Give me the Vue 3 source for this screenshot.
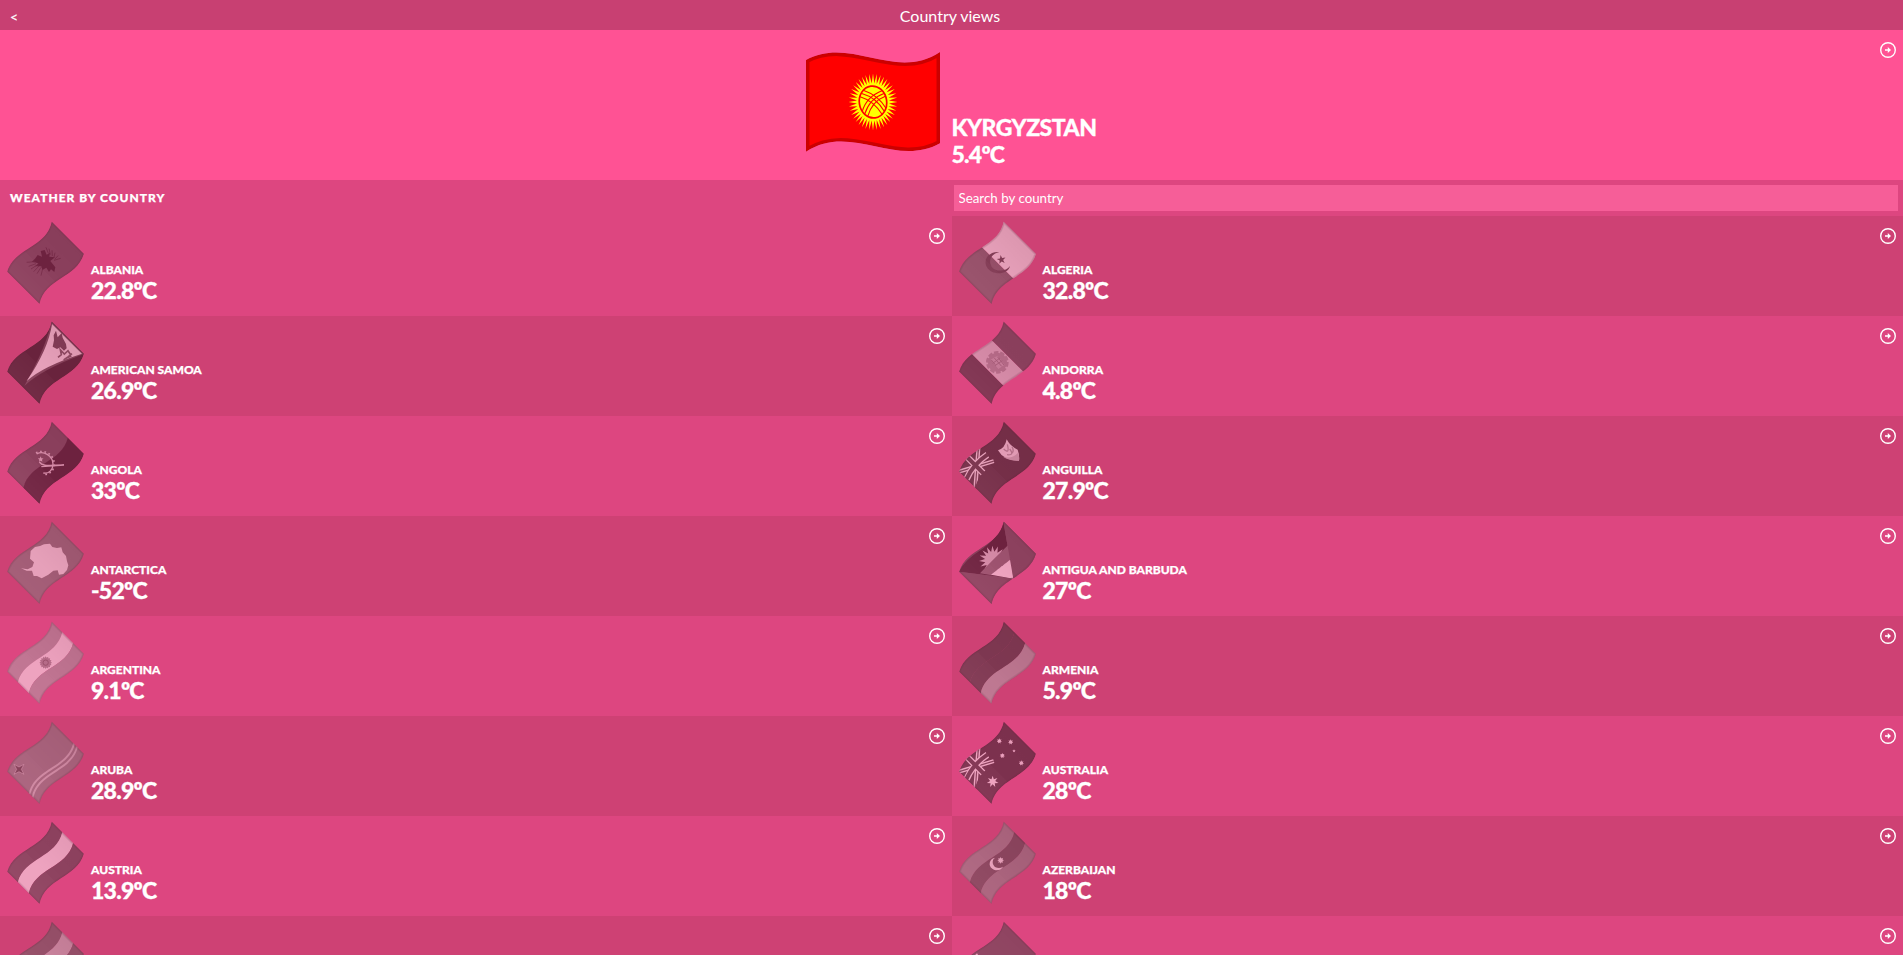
<script setup>
const top = { y: [8, -16.4, 30, 0] }
const bottom = { y: [99.7, 70.3, 116.2, 91.3] }
const xs = [0, 45, 89, 134]

// Point list for a wavy edge at a fraction of the flag's height
const edge = (f) => top.y.map((t, i) => [xs[i], +(t + (bottom.y[i] - t) * f).toFixed(2)])

const band = (from, to) => {
  const a = edge(from)
  const b = edge(to).reverse()
  return `M${a[0]} C${a[1]} ${a[2]} ${a[3]} L${b[0]} C${b[1]} ${b[2]} ${b[3]} Z`
}
const outline = band(0, 1)

const star = (cx, cy, n, outer, inner, turn = -90, squash = 1) => {
  const pts = []
  for (let i = 0; i < n * 2; i++) {
    const r = i % 2 ? inner : outer
    const a = ((turn + (i * 180) / n) * Math.PI) / 180
    pts.push(`${(cx + r * Math.cos(a)).toFixed(1)},${(cy + r * squash * Math.sin(a)).toFixed(1)}`)
  }
  return pts.join(' ')
}

const h = (...rows) => rows.map(([a, b, c]) => ({ d: band(a, b), c }))
const v = (...cols) => cols.map(([a, b, c]) => ({ d: `M${a} -5H${b}V105H${a}Z`, c }))
const thirds = (a, b, c) => h([0, 0.335, a], [0.33, 0.67, b], [0.665, 1, c])

const countries = [
  { id: 'al', name: 'Albania', temp: '22.8', field: h([0, 1, '#f80808']) },
  { id: 'dz', name: 'Algeria', temp: '32.8', field: v([0, 67, '#067a3c'], [67, 134, '#fff']) },
  { id: 'as', name: 'American Samoa', temp: '26.9', field: h([0, 1, '#000066']) },
  { id: 'ad', name: 'Andorra', temp: '4.8', field: v([0, 43, '#1016a0'], [43, 91, '#f5d410'], [91, 134, '#d8103a']) },
  { id: 'ao', name: 'Angola', temp: '33', field: h([0, 0.51, '#f00828'], [0.5, 1, '#000']) },
  { id: 'ai', name: 'Anguilla', temp: '27.9', field: h([0, 1, '#001f6b']), canton: true },
  { id: 'aq', name: 'Antarctica', temp: '-52', field: h([0, 1, '#3a7dce']) },
  { id: 'ag', name: 'Antigua and Barbuda', temp: '27', field: h([0, 1, '#e8112d']) },
  { id: 'ar', name: 'Argentina', temp: '9.1', field: thirds('#75aadb', '#fff', '#75aadb') },
  { id: 'am', name: 'Armenia', temp: '5.9', field: thirds('#d90012', '#0033a0', '#f2a800') },
  { id: 'aw', name: 'Aruba', temp: '28.9', field: h([0, 1, '#418fde'], [0.67, 0.715, '#f9d616'], [0.765, 0.81, '#f9d616']) },
  { id: 'au', name: 'Australia', temp: '28', field: h([0, 1, '#001f6b']), canton: true },
  { id: 'at', name: 'Austria', temp: '13.9', field: thirds('#ed1030', '#fff', '#ed1030') },
  { id: 'az', name: 'Azerbaijan', temp: '18', field: thirds('#3f9ccc', '#e0203c', '#509e2f') },
  { id: 'bs', field: thirds('#007a93', '#ffc72c', '#007a93') },
  { id: 'bh', field: h([0, 1, '#d8203a']) },
]
</script>

<template>
  <main class="page">
    <header class="topbar">
      <span class="back">&lt;</span>
      <h1>Country views</h1>
    </header>

    <section class="hero">
      <div class="hero-flag">
        <svg width="134" height="101" viewBox="0 0 134 101">
          <clipPath id="hero-clip"><path :d="outline" /></clipPath>
          <g clip-path="url(#hero-clip)">
            <path :d="outline" fill="#f00" />
            <polygon :points="star(67, 50, 40, 24.5, 16, -90, 1.16)" fill="#ff0" />
            <g transform="translate(67 50) rotate(-8)" fill="none" stroke="#f00" stroke-width="1.1">
              <ellipse rx="13.7" ry="16" stroke-width="1.7" />
              <path d="M-12 8Q-6 -6 11 -10M-10 11Q-3 -4 12 -7M-7.500 14Q-1 -1 13 -4M12 8Q6 -6 -8 -13M10 11Q4 -4 -10 -10M7.500 14Q1 -1 -12 -7" />
            </g>
            <path :d="outline" fill="none" stroke="#000" stroke-opacity=".2" stroke-width="7" />
          </g>
        </svg>
      </div>
      <div class="hero-text">
        <h2>Kyrgyzstan</h2>
        <p class="temp">5.4ºC</p>
      </div>
      <svg class="go" width="16" height="16" viewBox="0 0 16 16">
        <circle cx="8" cy="8" r="7.300" />
        <path d="M5 7.200H7.800V5L11 8L7.800 11V8.800H5Z" />
      </svg>
    </section>

    <section class="tools">
      <h3>Weather by country</h3>
      <input type="text" placeholder="Search by country" />
    </section>

    <section class="grid">
      <article v-for="c in countries" :key="c.id" class="cell">
        <svg class="flag" width="100" height="100" viewBox="0 0 300 300">
          <clipPath :id="`clip-${c.id}`">
            <path :d="outline" transform="translate(137 140.5) rotate(-45) scale(1.5) translate(-67 -50)" />
          </clipPath>
          <linearGradient :id="`shade-${c.id}`">
            <stop offset="0" stop-color="#fff" stop-opacity=".07" />
            <stop offset=".4" stop-color="#fff" stop-opacity=".03" />
            <stop offset=".41" stop-color="#000" stop-opacity="0" />
            <stop offset="1" stop-color="#000" stop-opacity=".08" />
          </linearGradient>
          <g :clip-path="`url(#clip-${c.id})`">
            <g transform="translate(137 140.5) rotate(-45) scale(1.5) translate(-67 -50)">
              <path v-for="(p, i) in c.field" :key="i" :d="p.d" :fill="p.c" />
              <g v-if="c.canton" fill="none">
                <path d="M0 8L64 42M0 54L64 -1" stroke="#fff" stroke-width="8" />
                <path d="M0 8L64 42M0 54L64 -1" stroke="#c8102e" stroke-width="2.500" />
                <path d="M32 -2V47M0 29Q30 17 64 24" stroke="#fff" stroke-width="13" />
                <path d="M32 -2V48M-1 29Q30 17 65 24" stroke="#a8001e" stroke-width="8" />
                <path d="M0 57C20 44 36 44 66 50" stroke="#001f6b" stroke-width="6" />
              </g>
            </g>

            <g v-if="c.id === 'al'" fill="none" stroke="#000">
              <path d="M105 128L113 117L126 122L122 105L134 102L140 116L150 110L148 122L165 124L151 135L166 154L163 168L153 160L147 168L139 155L127 162L124 151L105 151L115 142L95 137Z" fill="#000" stroke="none" />
              <path d="M138 94L145 112M147 98L151 116M156 103L157 120M165 110L162 124M174 119L164 130M182 127L162 133M80 139L105 137M86 151L108 143M93 159L113 146M101 167L117 150M111 173L123 154M123 179L128 158" stroke-width="3" opacity=".65" />
            </g>
            <g v-else-if="c.id === 'dz'" fill="#c01030">
              <path d="M142 108C112 105 91 130 105 154C119 179 168 178 174 150C163 166 132 170 119 152C107 133 119 113 142 108Z" />
              <polygon :points="star(148, 131, 5, 14, 5.500, -100)" />
            </g>
            <g v-else-if="c.id === 'as'">
              <path d="M154 14Q145 80 73 210Q125 160 252 114Z" fill="#b82020" />
              <path d="M156 24Q145 100 80 195Q130 150 246 113Z" fill="#fff" />
              <path d="M168 44L173 64L185 51L188 65L198 84L200 97L192 104L181 94L171 99L158 92L162 73L161 58Z" fill="#60301c" />
              <path d="M174 124L184 116L181 101L193 114L204 104L212 116M191 132L205 122L216 113M195 128L214 120" fill="none" stroke="#7a4a30" stroke-width="5" />
            </g>
            <g v-else-if="c.id === 'ad'">
              <circle cx="136" cy="139" r="29" fill="#b88568" stroke="#b88568" stroke-width="10" stroke-dasharray="13 5" />
              <path d="M116 131L136 119L158 146L139 159Z" fill="#d8a878" />
              <path d="M118 132L130 146M127 126L149 151M136 122L156 147M122 142L144 126M129 149L151 134" fill="none" stroke="#a06a50" stroke-width="3" />
            </g>
            <g v-else-if="c.id === 'ao'" fill="none" stroke="#f9d616">
              <path d="M110 114C130 103 158 118 159 144C159 162 146 174 130 171" stroke-width="4" />
              <path d="M108 111C132 98 162 114 163 144C163 164 147 178 128 175" stroke-width="5" stroke-dasharray="5 8" />
              <path d="M118 138C128 152 145 148 192 147L124 152" stroke-width="4" />
              <polygon :points="star(122, 130, 5, 9, 4)" fill="#f9d616" stroke="none" />
            </g>
            <g v-else-if="c.id === 'ai'">
              <path d="M138 103Q159 97 164 70Q175 91 197 101Q203 117 201 134Q154 133 138 103Z" fill="#fff" />
              <path d="M153 122Q181 130 198 110Q203 121 201 134Q171 134 153 122Z" fill="#a5d8d8" />
              <path d="M155 99Q174 117 166 85M165 116Q189 119 173 99M180 92Q188 107 178 113" fill="none" stroke="#e89858" stroke-width="4" />
            </g>
            <path v-else-if="c.id === 'aq'" d="M63 157L83 160L97 153L102 139L90 128L92 105L105 93L120 90L132 85L150 83L157 93L171 96L184 94L188 109L198 120L201 136L205 148L201 162L190 174L177 176L173 163L160 164L145 176L125 187L111 180L101 180L96 164L80 164Z" fill="#fff" />
            <g v-else-if="c.id === 'ag'">
              <path d="M21 167Q40 130 82 105Q140 65 154 17L184 187Z" fill="#000" />
              <polygon :points="star(124, 132, 16, 43, 25, -94)" fill="#fcd116" />
              <path d="M84 172Q117 137 171 85L178 130Q150 148 119 178Z" fill="#0072c6" />
              <path d="M117 176Q150 150 178 128L184 188Z" fill="#fff" />
              <path d="M21 167L184 188L154 17L190 10L290 120L120 300L10 190Z" fill="#e8112d" />
            </g>
            <g v-else-if="c.id === 'ar'" fill="none">
              <polygon :points="star(137, 140, 16, 19, 15)" fill="#c58a48" />
              <circle cx="137" cy="140" r="8" stroke="#85532a" stroke-width="3" />
            </g>
            <polygon v-else-if="c.id === 'aw'" :points="star(57, 160, 4, 21, 7, -45)" fill="#c8102e" stroke="#fff" stroke-opacity=".7" stroke-width="2" />
            <g v-else-if="c.id === 'au'" fill="#fff">
              <polygon :points="star(142, 75, 7, 8, 4.500)" />
              <polygon :points="star(176, 78, 7, 8, 4.500)" />
              <polygon :points="star(186, 105, 5, 5, 2.500)" />
              <polygon :points="star(151, 119, 7, 8, 4.500)" />
              <polygon :points="star(208, 141, 7, 8, 4.500)" />
              <polygon :points="star(122, 197, 7, 18, 8)" />
            </g>
            <g v-else-if="c.id === 'az'" fill="#fff">
              <path d="M130 125C112 127 107 149 121 158C134 167 150 161 153 152C143 159 128 156 124 146C120 137 123 128 130 125Z" />
              <polygon :points="star(146, 133, 8, 10, 6)" />
            </g>
            <path v-else-if="c.id === 'bs'" d="M21 167L120 150L119 264Z" fill="#000" />
            <path v-else-if="c.id === 'bh'" d="M75 112L86 129L90 150L105 149L108 170L124 170L127 191L143 191L119 265L15 167Z" fill="#fff" />

            <g transform="translate(137 140.5) rotate(-45) scale(1.5) translate(-67 -50)">
              <path :d="outline" :fill="`url(#shade-${c.id})`" />
              <path :d="outline" fill="none" stroke="#000" stroke-opacity=".1" stroke-width="7" />
              <path :d="outline" fill="none" stroke="#000" stroke-opacity=".12" stroke-width="4" />
            </g>
          </g>
        </svg>
        <div v-if="c.name" class="cell-text">
          <h4>{{ c.name }}</h4>
          <p class="temp">{{ c.temp }}ºC</p>
        </div>
        <svg class="go" width="16" height="16" viewBox="0 0 16 16">
          <circle cx="8" cy="8" r="7.300" />
          <path d="M5 7.200H7.800V5L11 8L7.800 11V8.800H5Z" />
        </svg>
      </article>
    </section>
  </main>
</template>

<style>
html,
body {
  margin: 0;
  overflow: hidden;
}
</style>

<style scoped>
.page {
  height: 955px;
  overflow: hidden;
  background: #dd4680;
  color: #fff;
  font-family: Lato, sans-serif;
}
h1, h2, h3, h4, p {
  margin: 0;
}
.topbar {
  display: grid;
  grid-template-columns: 100px 1fr 103px;
  align-items: center;
  height: 30px;
  background: #c84072;
}
.back {
  padding: 3px 0 0 10px;
  font-size: 14px;
  -webkit-text-stroke: 0.2px #fff;
}
h1 {
  padding-top: 1px;
  font-size: 16px;
  font-weight: 400;
  line-height: 20px;
  text-align: center;
}
.hero {
  position: relative;
  display: grid;
  grid-template-columns: 1fr 1fr;
  height: 150px;
  background: #ff5294;
}
.hero-flag {
  display: flex;
  justify-content: flex-end;
  padding: 22px 11.5px 0 0;
}
.hero-text {
  padding-top: 84px;
}
h2,
.temp {
  font-size: 23px;
  font-weight: 900;
  line-height: 27px;
  letter-spacing: -0.75px;
  -webkit-text-stroke: 0.3px #fff;
}
h2 {
  letter-spacing: -0.5px;
  text-transform: uppercase;
}
.go {
  position: absolute;
  top: 12px;
  right: 7px;
}
.go circle {
  fill: none;
  stroke: #fff;
  stroke-width: 1.4;
}
.go path {
  fill: #fff;
}
.tools {
  display: grid;
  grid-template-columns: 1fr 1fr;
  align-items: center;
  height: 36px;
}
h3 {
  padding: 0 0 2px 10px;
  font-size: 12px;
  font-weight: 900;
  letter-spacing: 1px;
  text-transform: uppercase;
  -webkit-text-stroke: 0.25px #fff;
}
input {
  box-sizing: border-box;
  height: 26px;
  margin: 0 5px 0 2px;
  padding: 0 5px 1px;
  border: 0;
  background: #f65e98;
  color: #fff;
  font: 13.333px Lato, sans-serif;
}
input::placeholder {
  color: #fff;
  opacity: 1;
}
.grid {
  display: grid;
  grid-template-columns: 1fr 1fr;
  grid-auto-rows: 100px;
}
.cell {
  position: relative;
  display: flex;
  background: #dd4680;
}
.cell:nth-child(4n + 2),
.cell:nth-child(4n + 3) {
  background: #ce4174;
}
.flag {
  flex: none;
  margin-right: -9px;
  filter: grayscale(1);
  opacity: 0.5;
}
.cell-text {
  padding-top: 46px;
}
h4 {
  font-size: 12px;
  font-weight: 900;
  line-height: 15px;
  text-transform: uppercase;
  -webkit-text-stroke: 0.25px #fff;
}
</style>
